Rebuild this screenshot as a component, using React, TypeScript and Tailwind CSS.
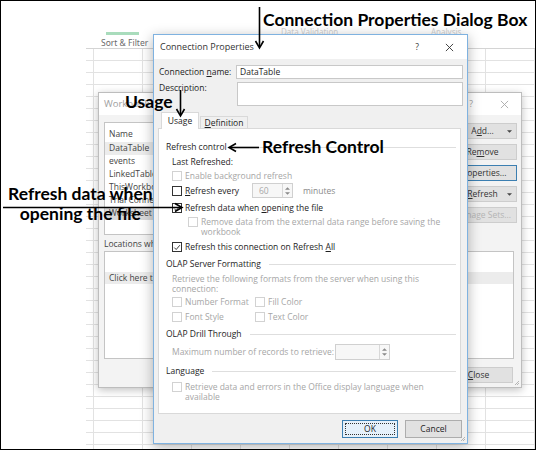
import React from "react";

const UI = "font-['Open_Sans',sans-serif]";
const NOTE = "font-['Lato',sans-serif] font-bold text-black";

function Box({ checked, disabled }: { checked?: boolean; disabled?: boolean }) {
  return (
    <span
      className={`w-[10px] h-[10px] border bg-white flex items-center justify-center shrink-0 ${
        disabled ? "border-[#d2d2d2]" : "border-[#333333]"
      }`}
    >
      {checked && (
        <svg viewBox="0 0 10 10" className="w-[9px] h-[9px]">
          <path d="M1.6 5.1 L4 7.5 L8.6 2.1" fill="none" stroke="#222" strokeWidth="1.1" />
        </svg>
      )}
    </span>
  );
}

function Group({ title, className = "" }: { title: string; className?: string }) {
  return (
    <div className={`flex items-center gap-[8px] h-[12px] pr-[4px] text-[#1e1e1e] ${className}`}>
      <span>{title}</span>
      <span className="flex-1 h-px bg-[#dedede]" />
    </div>
  );
}

function Spin({ value, className }: { value?: string; className: string }) {
  return (
    <div className={`flex border border-[#d0d0d0] bg-[#f7f7f7] ${className}`}>
      <span className="flex-1 pl-[6px] text-[#a8a8a8] leading-[13px]">{value}</span>
      <span className="w-[10px] border-l border-[#d8d8d8] flex flex-col items-center justify-center gap-[2px]">
        <svg viewBox="0 0 6 3" className="w-[5px] h-[3px]"><path d="M0 3 L3 0 L6 3Z" fill="#8a8a8a" /></svg>
        <svg viewBox="0 0 6 3" className="w-[5px] h-[3px]"><path d="M0 0 L3 3 L6 0Z" fill="#8a8a8a" /></svg>
      </span>
    </div>
  );
}

function CloseGlyph({ color }: { color: string }) {
  return (
    <svg viewBox="0 0 10 10" className="w-[9px] h-[9px]">
      <path d="M1 1 L9 9 M9 1 L1 9" stroke={color} strokeWidth="1" />
    </svg>
  );
}

function Sheet() {
  const rows = Array.from({ length: 34 });
  const cols = Array.from({ length: 9 });
  return (
    <div className="absolute left-[85px] top-0 right-0 bottom-0">
      <div className="h-[48px] border-b border-[#d4d4d4] relative">
        <div className="absolute left-[20px] top-[31px] w-[33px] h-[3px] bg-[#a9dcbc]" />
        <div className="absolute left-[15px] top-[37px] text-[8.5px] text-[#6b6b6b] leading-[10px]">Sort &amp; Filter</div>
        <div className="absolute left-[195px] top-[26px] text-[8px] text-[#d0d0d0] leading-[9px]">Data Validation</div>
        <div className="absolute left-[345px] top-[26px] text-[8px] text-[#d0d0d0] leading-[9px]">Analysis</div>
      </div>
      <div className="flex flex-col">
        {rows.map((_, r) => (
          <div key={r} className="flex h-[12px] border-b border-[#e2e2e2]">
            <div className="w-[43px] border-r border-[#e2e2e2]" />
            {cols.map((_, c) => (
              <div key={c} className="w-[49px] shrink-0 border-r border-[#e2e2e2]" />
            ))}
          </div>
        ))}
      </div>
    </div>
  );
}

function SideButton({ label, arrow, focus, disabled }: { label: React.ReactNode; arrow?: boolean; focus?: boolean; disabled?: boolean }) {
  return (
    <div
      className={`h-[16px] flex items-center justify-center relative border bg-[#e1e1e1] ${
        focus ? "border-[#3c7fb1]" : "border-[#cdcdcd]"
      } ${disabled ? "text-[#b4b4b4]" : "text-[#333]"}`}
    >
      <span>{label}</span>
      {arrow && (
        <svg viewBox="0 0 6 3" className="absolute right-[4px] top-[6px] w-[5px] h-[3px]">
          <path d="M0 0 L3 3 L6 0Z" fill="#444" />
        </svg>
      )}
    </div>
  );
}

function WorkbookConnections() {
  const names = ["DataTable", "events", "LinkedTable", "ThisWorkbook", "Trial Connection", "Worksheet"];
  return (
    <div className={`absolute left-[97px] top-[91px] w-[424px] h-[296px] border border-[#bdbdbd] bg-[#f3f3f3] shadow-[0_2px_8px_rgba(0,0,0,0.25)] flex flex-col text-[8.5px] ${UI}`}>
      <div className="h-[22px] bg-white flex items-center pl-[5px] pr-[12px] text-[#a0a0a0]">
        <span className="flex-1 text-[9.5px]">Workbook Connections</span>
        <span className="mr-[27px] text-[#a0a0a0]">?</span>
        <CloseGlyph color="#a8a8a8" />
      </div>
      <div className="flex-1 flex flex-col pl-[5px] pr-[4px] text-[#444]">
        <div className="flex gap-[3px] mt-[7px]">
          <div className="flex-1 h-[113px] border border-[#c4c4c4] bg-white flex flex-col pt-[5px]">
            <div className="h-[12px] flex items-center pl-[4px]">Name</div>
            {names.map((n, i) => (
              <div
                key={n}
                className={`h-[13px] flex items-center pl-[4px] ${i === 0 ? "mt-[2px] bg-[#ececec]" : ""} ${
                  i === 5 ? "bg-[#d9d9d9]" : ""
                }`}
              >
                {n}
              </div>
            ))}
          </div>
          <div className="w-[69px] flex flex-col gap-[5px] pt-[1px]">
            <SideButton label={<>A<u>d</u>d...</>} arrow />
            <SideButton label={<>Re<u>m</u>ove</>} />
            <SideButton label="Properties..." focus />
            <SideButton label={<><u>R</u>efresh</>} arrow />
            <SideButton label="Manage Sets..." disabled />
          </div>
        </div>
        <div className="h-[12px] mt-[3px] flex items-center">Locations where connections are used in this workbook</div>
        <div className="h-[108px] mt-[1px] mr-[3px] border border-[#c4c4c4] bg-white pt-[20px]">
          <div className="h-[12px] flex items-center pl-[4px] bg-[#ececec]">Click here to see where the selected connections are used</div>
        </div>
        <div className="flex justify-end mr-[4px] mt-[8px]">
          <div className="w-[69px]">
            <SideButton label={<><u>C</u>lose</>} />
          </div>
        </div>
      </div>
      <svg viewBox="0 0 6 6" className="absolute right-[1px] bottom-[1px] w-[6px] h-[6px]">
        <path d="M5 1 L1 5 M5 3 L3 5" stroke="#b5b5b5" strokeWidth="1" />
      </svg>
    </div>
  );
}

function ConnectionProperties() {
  return (
    <div className={`absolute left-[152px] top-[33px] w-[315px] h-[410px] border border-[#7fb2e0] bg-[#f0f0f0] shadow-[0_3px_12px_rgba(0,0,0,0.3)] flex flex-col text-[8.5px] leading-[10px] text-[#1e1e1e] ${UI}`}>
      <div className="h-[24px] shrink-0 bg-white flex items-center pl-[6px] pr-[13px]">
        <span className="flex-1 text-[9px] text-[#333]">Connection Properties</span>
        <span className="mr-[26px] text-[#333]">?</span>
        <CloseGlyph color="#333" />
      </div>

      <div className="flex-1 flex flex-col px-[4px]">
        <div className="flex items-center mt-[6px] h-[14px]">
          <span className="w-[78px] pl-[1px]">Connection <u>n</u>ame:</span>
          <div className="flex-1 h-[14px] border border-[#c8c8c8] bg-white pl-[3px] flex items-center">DataTable</div>
        </div>
        <div className="flex mt-[3px]">
          <span className="w-[79px] pl-[1px] pt-[1px]">Description:</span>
          <div className="flex-1 h-[24px] border border-[#c8c8c8] bg-white" />
        </div>

        <div className="flex items-end mt-[6px] ml-[3px] h-[17px] relative z-10">
          <div className="w-[38px] h-[17px] bg-white border border-b-0 border-[#d9d9d9] flex items-center justify-center">Usage</div>
          <div className="w-[48px] h-[13px] ml-[1px] border border-b-0 border-[#d9d9d9] flex items-center justify-center">
            <span><u>D</u>efinition</span>
          </div>
        </div>

        <div className="w-[303px] h-[286px] -mt-px border border-[#d9d9d9] bg-white flex flex-col pl-[7px]">
          <Group title="Refresh control" className="mt-[12px]" />
          <div className="h-[12px] mt-[3px] ml-[6px] flex items-center">Last Refreshed:</div>
          <div className="h-[12px] mt-[2px] ml-[6px] flex items-center gap-[3px] text-[#a6a6a6]">
            <Box disabled />
            <span>Enable background refresh</span>
          </div>
          <div className="h-[15px] mt-[1px] ml-[6px] flex items-center gap-[3px]">
            <Box />
            <span className="w-[64px]"><u>R</u>efresh every</span>
            <Spin value="60" className="w-[41px] h-[15px]" />
            <span className="ml-[7px] text-[#8a8a8a]">minutes</span>
          </div>
          <div className="h-[12px] mt-[4px] ml-[6px] flex items-center gap-[3px]">
            <Box checked />
            <span>Refresh data when <u>o</u>pening the file</span>
          </div>
          <div className="mt-[3px] ml-[22px] flex gap-[3px] text-[#a6a6a6]">
            <Box disabled />
            <span>
              Remove data from the external data range before saving the
              <br />
              workbook
            </span>
          </div>
          <div className="h-[12px] mt-[4px] ml-[6px] flex items-center gap-[3px]">
            <Box checked />
            <span>Refresh this connection on Refresh <u>A</u>ll</span>
          </div>

          <Group title="OLAP Server Formatting" className="mt-[5px]" />
          <div className="mt-[4px] ml-[6px] text-[#a6a6a6]">
            Retrieve the following formats from the server when using this
            <br />
            connection:
          </div>
          <div className="h-[12px] mt-[2px] ml-[6px] flex items-center text-[#a6a6a6]">
            <span className="w-[83px] flex items-center gap-[3px]"><Box disabled />Number Format</span>
            <span className="flex items-center gap-[3px]"><Box disabled />Fill Color</span>
          </div>
          <div className="h-[12px] mt-[3px] ml-[6px] flex items-center text-[#a6a6a6]">
            <span className="w-[83px] flex items-center gap-[3px]"><Box disabled />Font Style</span>
            <span className="flex items-center gap-[3px]"><Box disabled />Text Color</span>
          </div>

          <Group title="OLAP Drill Through" className="mt-[5px]" />
          <div className="h-[16px] mt-[4px] ml-[6px] flex items-center text-[#a6a6a6]">
            <span className="w-[163px]">Maximum number of records to retrieve:</span>
            <Spin className="w-[55px] h-[16px]" />
          </div>

          <Group title="Language" className="mt-[5px]" />
          <div className="mt-[5px] ml-[6px] flex gap-[3px] text-[#a6a6a6]">
            <Box disabled />
            <span>
              Retrieve data and errors in the Office display language when
              <br />
              available
            </span>
          </div>
        </div>

        <div className="flex justify-end gap-[7px] mt-[6px] mr-px">
          <div className="w-[56px] h-[18px] border border-[#3c7fb1] bg-[#e5f1fb] flex items-center justify-center">
            <span className="border border-dotted border-[#333] w-[50px] h-[12px] flex items-center justify-center">OK</span>
          </div>
          <div className="w-[57px] h-[18px] border border-[#adadad] bg-[#e1e1e1] flex items-center justify-center">Cancel</div>
        </div>
      </div>
      <svg viewBox="0 0 6 6" className="absolute right-[1px] bottom-[1px] w-[6px] h-[6px]">
        <path d="M5 1 L1 5 M5 3 L3 5" stroke="#b5b5b5" strokeWidth="1" />
      </svg>
    </div>
  );
}

function Callouts() {
  return (
    <>
      <svg className="absolute inset-0 w-[536px] h-[450px] z-30 pointer-events-none" viewBox="0 0 536 450">
        <g stroke="#000" strokeWidth="1.6" fill="none">
          <path d="M258.5 6 V46" />
          <path d="M254.5 40 L258.5 47 L262.5 40" />
          <path d="M179.5 89 V114" />
          <path d="M175.5 108 L179.5 115 L183.5 108" />
          <path d="M258 146.5 H229" />
          <path d="M235 142.5 L228 146.5 L235 150.5" />
          <path d="M2 206.5 H180" />
          <path d="M174 202.5 L181 206.5 L174 210.5" />
        </g>
      </svg>
      <div className={`absolute z-30 left-[262px] top-[8px] text-[17.5px] leading-[22px] ${NOTE}`}>Connection Properties Dialog Box</div>
      <div className={`absolute z-30 left-[124px] top-[90px] text-[17.5px] leading-[22px] ${NOTE}`}>Usage</div>
      <div className={`absolute z-30 left-[261px] top-[135px] text-[17.5px] leading-[22px] ${NOTE}`}>Refresh Control</div>
      <div className={`absolute z-30 left-[7px] top-[183px] text-[17.5px] leading-[20px] text-center ${NOTE}`}>
        Refresh data when
        <br />
        opening the file
      </div>
    </>
  );
}

export default function App() {
  return (
    <div className="relative w-[536px] h-[450px] overflow-hidden bg-white border border-black">
      <Sheet />
      <WorkbookConnections />
      <ConnectionProperties />
      <Callouts />
    </div>
  );
}
